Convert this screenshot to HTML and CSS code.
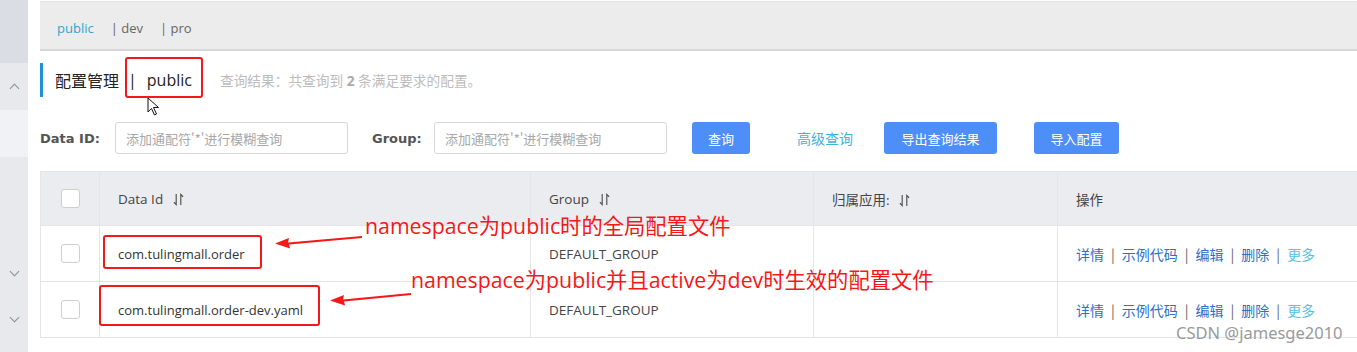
FILE: index.html
```html
<!DOCTYPE html>
<html lang="zh-CN">

<head>
    <meta charset="UTF-8">
    <title>配置管理</title>
    <link rel="stylesheet" href="styles.css">
</head>

<body>
    <div class="page">
        <!-- 左侧折叠菜单 -->
        <div class="sidebar">
            <div class="side-top"></div>
            <div class="side-item"><span class="chev up"></span></div>
            <div class="side-item light"></div>
            <div class="side-rest">
                <span class="chev down first"></span>
                <span class="chev down"></span>
            </div>
        </div>

        <div class="main">
            <div class="ns-tabs">
                <span class="ns active">public</span>
                <span class="ns">| dev</span>
                <span class="ns">| pro</span>
            </div>

            <div class="title-row">
                <span class="title">配置管理</span>
                <span class="title-sep">|</span>
                <span class="title-ns">public</span>
                <span class="result">查询结果：共查询到 <b>2</b> 条满足要求的配置。</span>
            </div>

            <div class="search-row">
                <label class="field-label">Data ID:</label>
                <input class="field" type="text" placeholder="添加通配符'*'进行模糊查询">
                <label class="field-label group-label">Group:</label>
                <input class="field" type="text" placeholder="添加通配符'*'进行模糊查询">
                <button class="btn btn-query">查询</button>
                <a class="link-adv">高级查询</a>
                <button class="btn btn-export">导出查询结果</button>
                <button class="btn btn-import">导入配置</button>
            </div>

            <table class="config-table">
                <colgroup>
                    <col style="width: 59px">
                    <col style="width: 431px">
                    <col style="width: 283px">
                    <col style="width: 244px">
                    <col>
                </colgroup>
                <thead>
                    <tr>
                        <th class="cb-cell"><span class="checkbox"></span></th>
                        <th>Data Id <svg class="sort" viewBox="0 0 12 14"><path d="M3.5 1V12.5L1 10M8.5 13V1.5L11 4"/></svg></th>
                        <th>Group <svg class="sort" viewBox="0 0 12 14"><path d="M3.5 1V12.5L1 10M8.5 13V1.5L11 4"/></svg></th>
                        <th>归属应用: <svg class="sort" viewBox="0 0 12 14"><path d="M3.5 1V12.5L1 10M8.5 13V1.5L11 4"/></svg></th>
                        <th>操作</th>
                    </tr>
                </thead>
                <tbody>
                    <tr>
                        <td class="cb-cell"><span class="checkbox"></span></td>
                        <td class="data-id">com.tulingmall.order</td>
                        <td class="group">DEFAULT_GROUP</td>
                        <td></td>
                        <td class="ops"><a>详情</a><i>|</i><a>示例代码</a><i>|</i><a>编辑</a><i>|</i><a>删除</a><i>|</i><a class="more">更多</a></td>
                    </tr>
                    <tr>
                        <td class="cb-cell"><span class="checkbox"></span></td>
                        <td class="data-id">com.tulingmall.order-dev.yaml</td>
                        <td class="group">DEFAULT_GROUP</td>
                        <td></td>
                        <td class="ops"><a>详情</a><i>|</i><a>示例代码</a><i>|</i><a>编辑</a><i>|</i><a>删除</a><i>|</i><a class="more">更多</a></td>
                    </tr>
                </tbody>
            </table>
        </div>
    </div>

    <!-- 截图上的标注 -->
    <div class="mark box-title"></div>
    <div class="mark box-row1"></div>
    <div class="mark box-row2"></div>
    <svg class="arrow arrow1" viewBox="0 0 90 16"><path d="M88 2L14 8.5L15 4L1 9.5L16 14.5L15 10.5L88 4Z"/></svg>
    <svg class="arrow arrow2" viewBox="0 0 84 16"><path d="M82 2L14 8.5L15 4L1 9.5L16 14.5L15 10.5L82 4Z"/></svg>
    <div class="note note1">namespace为public时的全局配置文件</div>
    <div class="note note2">namespace为public并且active为dev时生效的配置文件</div>
    <svg class="cursor" viewBox="0 0 13 19"><path d="M1 1V15L4.5 11.5L7.5 18L9.5 17L6.5 10.5H11.5Z"/></svg>
    <div class="watermark">CSDN @jamesge2010</div>
</body>

</html>
```

FILE: styles.css
```css
body {
    margin: 0;
    width: 1357px;
    height: 352px;
    overflow: hidden;
    background: #fff;
    font-family: "Open Sans", "Noto Sans CJK SC", sans-serif;
    color: #333;
    position: relative;
}

.page {
    display: flex;
    height: 352px;
}

/* 左侧菜单 */
.sidebar {
    width: 28px;
    flex: none;
    display: flex;
    flex-direction: column;
}

.side-top {
    height: 63px;
    background: #dadde3;
}

.side-item {
    height: 47px;
    background: #e7e9ed;
    display: flex;
    align-items: center;
    justify-content: center;
}

.side-item.light {
    background: #f1f2f5;
}

.side-rest {
    flex: 1;
    background: #e7e9ed;
    display: flex;
    flex-direction: column;
    align-items: center;
}

.chev {
    width: 6px;
    height: 6px;
    border-left: 1px solid #8a8f99;
    border-top: 1px solid #8a8f99;
}

.chev.up {
    transform: rotate(45deg);
    margin-top: 4px;
}

.chev.down {
    transform: rotate(225deg);
    margin-top: 39px;
}

.chev.first {
    margin-top: 111px;
}

.main {
    flex: 1;
    padding-left: 12px;
    min-width: 0;
}

/* 命名空间 tab */
.ns-tabs {
    margin-top: 1px;
    height: 50px;
    box-sizing: border-box;
    background: #ececec;
    border-top: 1px solid #e2e2e2;
    border-bottom: 2px solid #d8d8d8;
    display: flex;
    align-items: center;
    padding-left: 17px;
    padding-top: 4px;
    font-size: 13px;
    color: #666;
}

.ns {
    margin-right: 17px;
}

.ns.active {
    color: #2fa6d3;
}

/* 标题 */
.title-row {
    margin-top: 12px;
    height: 34px;
    border-left: 3px solid #1f8fd6;
    display: flex;
    align-items: center;
    padding-left: 12px;
}

.title {
    font-size: 16px;
    color: #222;
}

.title-sep {
    font-size: 16px;
    margin: 0 10px 0 9px;
    color: #222;
}

.title-ns {
    font-size: 16px;
    color: #222;
}

.result {
    margin-left: 28px;
    font-size: 13.7px;
    color: #bcbcbc;
}

.result b {
    color: #aaa;
}

/* 搜索栏 */
.search-row {
    margin-top: 25px;
    height: 32px;
    display: flex;
    align-items: center;
}

.field-label {
    font-size: 13px;
    font-weight: bold;
    color: #555;
    width: 75px;
    font-family: "DejaVu Sans", sans-serif;
}

.group-label {
    width: 38px;
    margin-left: 24px;
    margin-right: 24px;
}

.field {
    width: 233px;
    height: 32px;
    box-sizing: border-box;
    border: 1px solid #d7d7d7;
    border-radius: 3px;
    padding: 0 10px;
    font-size: 13px;
    font-family: "Noto Sans CJK SC", sans-serif;
}

.field::placeholder {
    color: #a8a8a8;
}

.btn {
    height: 32px;
    border: none;
    border-radius: 3px;
    background: #4d8ef8;
    color: #fff;
    font-size: 13px;
    font-family: "Noto Sans CJK SC", sans-serif;
}

.btn-query {
    width: 58px;
    margin-left: 25px;
}

.link-adv {
    margin-left: 47px;
    font-size: 14px;
    color: #40b2dc;
    font-family: "Noto Sans CJK SC", sans-serif;
}

.btn-export {
    width: 113px;
    margin-left: 31px;
}

.btn-import {
    width: 85px;
    margin-left: 37px;
}

/* 配置列表 */
.config-table {
    margin-top: 17px;
    width: 1330px;
    border-collapse: collapse;
    table-layout: fixed;
    font-size: 13px;
}

.config-table th,
.config-table td {
    border: 1px solid #e4e5e8;
    text-align: left;
    padding: 0 0 0 18px;
    font-weight: normal;
    white-space: nowrap;
}

.config-table th {
    background: #ebecf0;
    height: 53px;
    color: #444;
    font-size: 13.5px;
}

.config-table td {
    height: 55px;
}

.config-table .cb-cell {
    padding-left: 20px;
}

.checkbox {
    display: block;
    width: 17px;
    height: 17px;
    border: 1px solid #cfcfcf;
    border-radius: 3px;
    background: #fff;
}

.sort {
    width: 11px;
    height: 13px;
    vertical-align: -2px;
    margin-left: 6px;
    fill: none;
    stroke: #555;
    stroke-width: 1.3;
}

.data-id {
    color: #333;
}

.config-table td.group {
    font-size: 13.5px;
    color: #444;
}

.config-table td.ops {
    color: #666;
    font-size: 14px;
    font-family: "Noto Sans CJK SC", sans-serif;
}

.ops a {
    color: #2e6fc7;
}

.ops i {
    font-style: normal;
    margin: 0 7px;
    color: #666;
}

.ops a.more {
    color: #58c2e6;
}

/* 标注 */
.mark {
    position: absolute;
    border: 2px solid #f41818;
    border-radius: 3px;
}

.box-title {
    left: 125px;
    top: 57px;
    width: 74px;
    height: 37px;
}

.box-row1 {
    left: 103px;
    top: 235px;
    width: 155px;
    height: 30px;
}

.box-row2 {
    left: 99px;
    top: 285px;
    width: 217px;
    height: 37px;
}

.arrow {
    position: absolute;
    fill: #f41818;
}

.arrow1 {
    left: 274px;
    top: 234px;
    width: 90px;
    height: 16px;
}

.arrow2 {
    left: 329px;
    top: 291px;
    width: 84px;
    height: 16px;
}

.note {
    position: absolute;
    color: #f41818;
    font-size: 21.3px;
    font-family: "Open Sans", "Noto Sans CJK SC", sans-serif;
    white-space: nowrap;
}

.note1 {
    left: 365px;
    top: 209px;
}

.note2 {
    left: 411px;
    top: 263px;
}

.cursor {
    position: absolute;
    left: 147px;
    top: 97px;
    width: 13px;
    height: 19px;
    fill: #fff;
    stroke: #111;
    stroke-width: 1;
}

.watermark {
    position: absolute;
    left: 1176px;
    top: 321px;
    font-size: 16.5px;
    color: #9a9a9a;
    font-family: "Noto Sans", sans-serif;
}
```
